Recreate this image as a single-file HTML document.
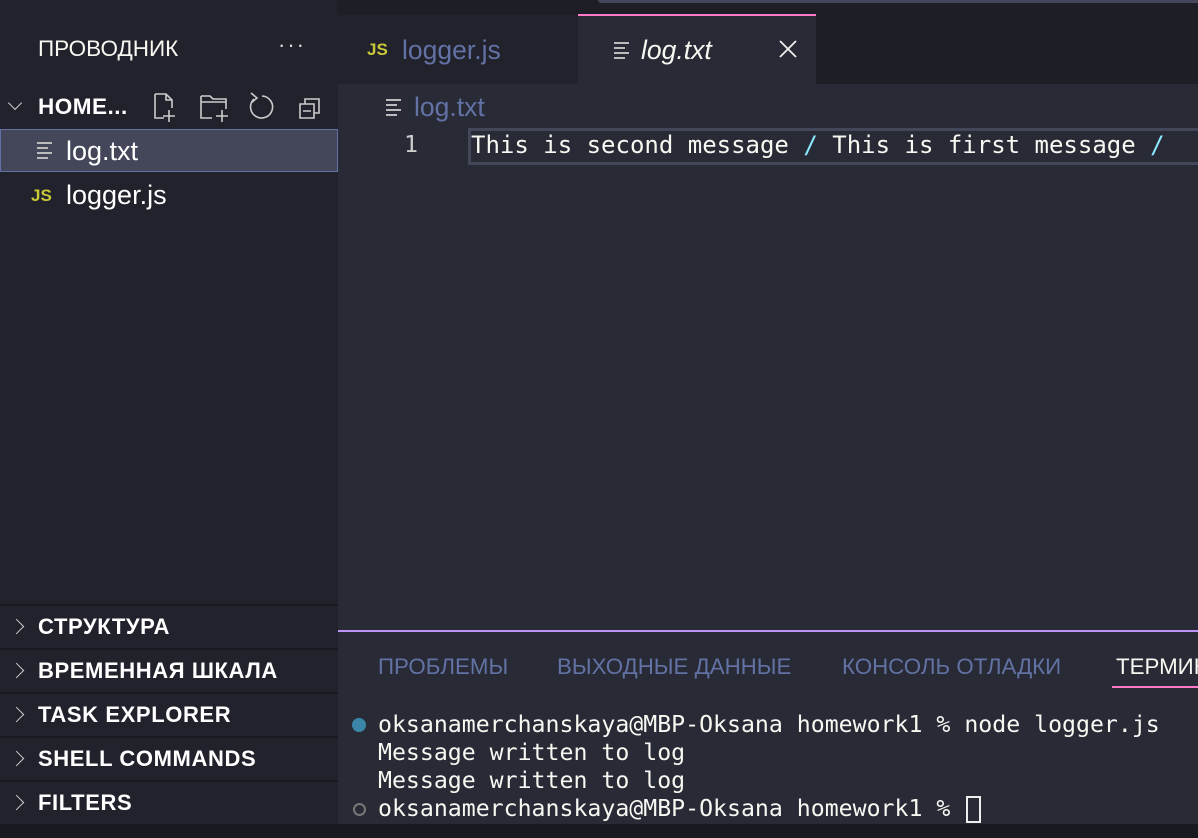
<!DOCTYPE html>
<html><head><meta charset="utf-8"><style>
*{margin:0;padding:0;box-sizing:border-box}
body{width:1198px;height:838px;overflow:hidden;background:#282a36;font-family:"Liberation Sans","DejaVu Sans",sans-serif;position:relative;color:#f8f8f2}
.abs{position:absolute}
.mono{font-family:"DejaVu Sans Mono","Liberation Mono",monospace;font-size:23.3px;white-space:pre}
.sec{position:absolute;left:0;width:338px;height:44px;border-top:2px solid #191a21;font-weight:bold;font-size:22px;color:#fff;padding-left:38px;line-height:42px;letter-spacing:.6px}
.chev{position:absolute;left:11px;top:15px;width:11px;height:11px;border-right:1.5px solid #ccc;border-top:1.5px solid #ccc;transform:rotate(45deg)}
.lines{position:absolute;width:15px}
.lines i{display:block;height:2px;background:#bbb;margin-bottom:3px}
.tab{font-size:22.3px;color:#6272a4;white-space:nowrap;top:654px}
</style></head><body>
<div class="abs" style="left:0;top:0;width:1198px;height:84px;background:#1e1f26"></div>
<div class="abs" style="left:0;top:0;width:338px;height:84px;background:#21222c"></div>
<div class="abs" style="left:598px;top:0;width:600px;height:3px;background:#44475a;border-radius:0 0 0 4px"></div>
<div class="abs" style="left:38px;top:36px;font-size:22.5px;color:#f8f8f2">ПРОВОДНИК</div>
<div class="abs" style="left:278px;top:32px;font-size:22px;color:#ddd;letter-spacing:2px">···</div>
<div class="abs" style="left:338px;top:15px;width:240px;height:69px;background:#21222c"></div>
<div class="abs" style="left:367px;top:40px;font-size:17px;font-weight:bold;color:#c8c83a">JS</div>
<div class="abs" style="left:402px;top:35px;font-size:26.5px;color:#6272a4">logger.js</div>
<div class="abs" style="left:578px;top:14px;width:238px;height:70px;background:#282a36;border-top:2px solid #ff79c6"></div>
<div class="lines" style="left:614px;top:42px"><i></i><i style="width:11px"></i><i></i><i style="width:11px"></i></div>
<div class="abs" style="left:641px;top:35px;font-size:26.5px;font-style:italic;color:#f8f8f2">log.txt</div>
<svg class="abs" style="left:779px;top:40px" width="18" height="18" stroke="#eee" stroke-width="1.8"><path d="M1 1L17 17M17 1L1 17"/></svg>
<div class="abs" style="left:0;top:84px;width:338px;height:741px;background:#21222c"></div>
<div class="abs" style="left:10px;top:98px;width:10px;height:10px;border-right:1.5px solid #ccc;border-bottom:1.5px solid #ccc;transform:rotate(45deg)"></div>
<div class="abs" style="left:38px;top:94px;font-size:22.5px;font-weight:bold;color:#fff;letter-spacing:.5px">HOME...</div>
<svg class="abs" style="left:150px;top:90px" width="185" height="34" fill="none" stroke="#ccc" stroke-width="1.6">
<path d="M5 4h11l6 6v8M5 4v24h9M16 4v6h6M19 20v12M13 26h12"/>
<path d="M51 6h9l3 3h13v10M51 6v22h11M51 12h25M72 20v12M66 26h12"/>
<path d="M104 9a11 11 0 1 0 8 -3M101 3l6 5l-6 5"/>
<path d="M150 14h14v14h-14zM155 14v-5h14v14h-5M153 21h8"/>
</svg>
<div class="abs" style="left:0;top:129px;width:338px;height:43px;background:#44475a;border:1.5px solid #6272a4"></div>
<div class="lines" style="left:37px;top:142px"><i></i><i style="width:11px"></i><i></i><i style="width:11px"></i></div>
<div class="abs" style="left:66px;top:136px;font-size:27px;color:#fff">log.txt</div>
<div class="abs" style="left:31px;top:186px;font-size:17px;font-weight:bold;color:#c8c83a">JS</div>
<div class="abs" style="left:66px;top:180px;font-size:27px;color:#fff">logger.js</div>
<div class="sec" style="top:604px"><span class="chev"></span>СТРУКТУРА</div>
<div class="sec" style="top:648px"><span class="chev"></span>ВРЕМЕННАЯ ШКАЛА</div>
<div class="sec" style="top:692px"><span class="chev"></span>TASK EXPLORER</div>
<div class="sec" style="top:736px"><span class="chev"></span>SHELL COMMANDS</div>
<div class="sec" style="top:780px"><span class="chev"></span>FILTERS</div>
<div class="lines" style="left:386px;top:99px"><i></i><i style="width:11px"></i><i></i><i style="width:11px"></i></div>
<div class="abs" style="left:414px;top:92px;font-size:26.5px;color:#6272a4">log.txt</div>
<div class="abs" style="left:468px;top:128px;width:730px;height:37px;border-top:3px solid #44475a;border-bottom:3px solid #44475a;border-left:3px solid #44475a"></div>
<div class="abs mono" style="left:404px;top:131px;color:#ccc">1</div>
<div class="abs mono" style="left:471px;top:131px;color:#f8f8f2;font-size:24px">This is second message <span style="color:#8be9fd">/</span> This is first message <span style="color:#8be9fd">/</span></div>
<div class="abs" style="left:338px;top:630px;width:860px;height:2px;background:#bd93f9"></div>
<div class="abs tab" style="left:378px">ПРОБЛЕМЫ</div>
<div class="abs tab" style="left:557px">ВЫХОДНЫЕ ДАННЫЕ</div>
<div class="abs tab" style="left:842px">КОНСОЛЬ ОТЛАДКИ</div>
<div class="abs tab" style="left:1116px;color:#f8f8f2">ТЕРМИНАЛ</div>
<div class="abs" style="left:1112px;top:686px;width:86px;height:2px;background:#ff79c6"></div>
<div class="abs" style="left:352px;top:718px;width:14px;height:14px;border-radius:50%;background:#3b86a8"></div>
<div class="abs" style="left:353px;top:803px;width:13px;height:13px;border-radius:50%;border:2px solid #777"></div>
<div class="abs mono" style="left:378px;top:711px;line-height:28px;color:#f8f8f2;font-size:23.2px">oksanamerchanskaya@MBP-Oksana homework1 % node logger.js
Message written to log
Message written to log
oksanamerchanskaya@MBP-Oksana homework1 % </div>
<div class="abs" style="left:966px;top:796px;width:15px;height:27px;border:2px solid #eee"></div>
<div class="abs" style="left:0;top:824px;width:1198px;height:14px;background:#191a21"></div>
</body></html>
